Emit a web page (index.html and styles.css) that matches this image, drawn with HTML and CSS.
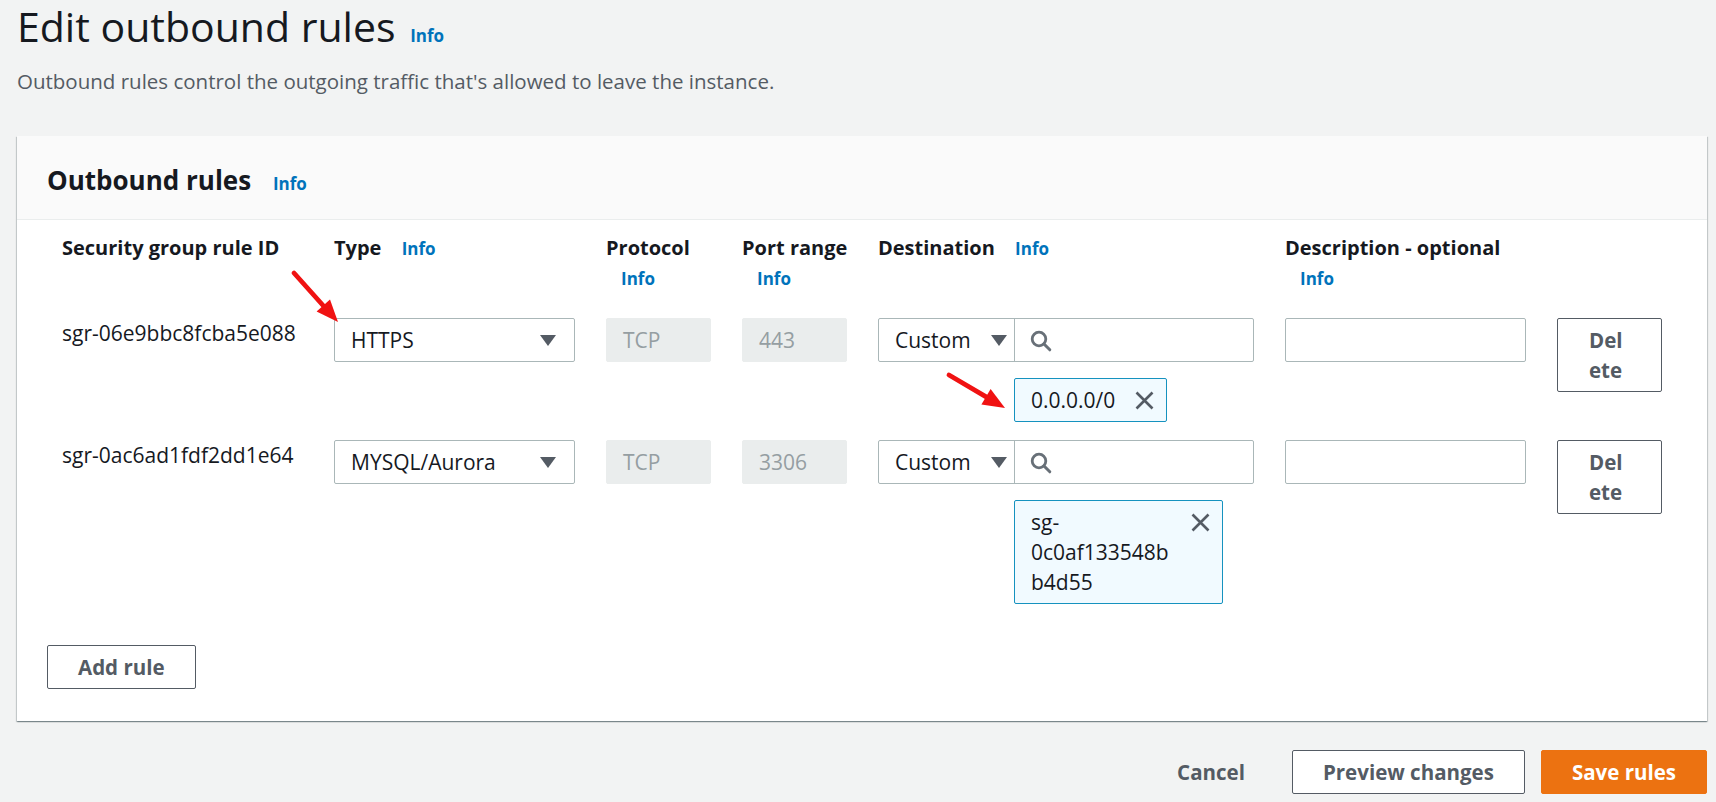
FILE: index.html
```html
<!DOCTYPE html>
<html lang="en">
<head>
<meta charset="utf-8">
<title>Edit outbound rules</title>
<link rel="stylesheet" href="styles.css">
</head>
<body>
<div class="page">
  <header class="page-header">
    <h1 class="title">Edit outbound rules <a class="info" href="#">Info</a></h1>
    <p class="subtitle">Outbound rules control the outgoing traffic that's allowed to leave the instance.</p>
  </header>

  <section class="card">
    <div class="card-header">
      <h2 class="card-title">Outbound rules <a class="info" href="#">Info</a></h2>
    </div>
    <div class="card-body">
      <div class="rules">
        <div class="rule-grid rule-head">
          <div class="label"><span class="nowrap">Security group rule ID</span></div>
          <div class="label"><span class="nowrap">Type</span> <a class="info" href="#">Info</a></div>
          <div class="label"><span class="nowrap">Protocol</span> <a class="info" href="#">Info</a></div>
          <div class="label"><span class="nowrap">Port range</span> <a class="info" href="#">Info</a></div>
          <div class="label"><span class="nowrap">Destination</span> <a class="info" href="#">Info</a></div>
          <div class="label"><span class="nowrap">Description - optional</span> <a class="info" href="#">Info</a></div>
          <div></div>
        </div>

        <div class="rule-grid rule-row">
          <div class="rule-id">sgr-06e9bbc8fcba5e088</div>
          <div class="select"><span>HTTPS</span><span class="caret"></span></div>
          <div class="field disabled">TCP</div>
          <div class="field disabled">443</div>
          <div class="dest">
            <div class="dest-group">
              <div class="dest-select"><span>Custom</span><span class="caret"></span></div>
              <div class="dest-search">
                <svg width="22" height="22" viewBox="0 0 22 22"><circle cx="9" cy="9" r="6.8" fill="none" stroke="#687078" stroke-width="2.8"/><path d="M14 14 L19.8 19.8" stroke="#687078" stroke-width="3" stroke-linecap="round"/></svg>
              </div>
            </div>
            <div class="token">
              <span class="token-text">0.0.0.0/0</span>
              <span class="token-x"><svg width="19" height="19" viewBox="0 0 19 19"><path d="M1.5 1.5 L17.5 17.5 M17.5 1.5 L1.5 17.5" stroke="#545b64" stroke-width="2.6"/></svg></span>
            </div>
          </div>
          <div class="field"></div>
          <div><button class="btn btn-delete">Delete</button></div>
        </div>

        <div class="rule-grid rule-row">
          <div class="rule-id">sgr-0ac6ad1fdf2dd1e64</div>
          <div class="select"><span>MYSQL/Aurora</span><span class="caret"></span></div>
          <div class="field disabled">TCP</div>
          <div class="field disabled">3306</div>
          <div class="dest">
            <div class="dest-group">
              <div class="dest-select"><span>Custom</span><span class="caret"></span></div>
              <div class="dest-search">
                <svg width="22" height="22" viewBox="0 0 22 22"><circle cx="9" cy="9" r="6.8" fill="none" stroke="#687078" stroke-width="2.8"/><path d="M14 14 L19.8 19.8" stroke="#687078" stroke-width="3" stroke-linecap="round"/></svg>
              </div>
            </div>
            <div class="token token-long">
              <span class="token-text">sg-<wbr>0c0af133548bb4d55</span>
              <span class="token-x"><svg width="19" height="19" viewBox="0 0 19 19"><path d="M1.5 1.5 L17.5 17.5 M17.5 1.5 L1.5 17.5" stroke="#545b64" stroke-width="2.6"/></svg></span>
            </div>
          </div>
          <div class="field"></div>
          <div><button class="btn btn-delete">Delete</button></div>
        </div>
      </div>
      <button class="btn add-rule">Add rule</button>
    </div>
  </section>

  <footer class="actions">
    <button class="btn btn-link">Cancel</button>
    <button class="btn">Preview changes</button>
    <button class="btn btn-primary">Save rules</button>
  </footer>

  <svg class="annotations" width="1716" height="802" viewBox="0 0 1716 802">
    <line x1="294" y1="273" x2="324" y2="306.5" stroke="#f01212" stroke-width="4.8" stroke-linecap="round"/>
    <polygon points="338,322 316.6,311.6 330,299.6" fill="#f01212"/>
    <line x1="949" y1="375" x2="987" y2="397.4" stroke="#f01212" stroke-width="4.8" stroke-linecap="round"/>
    <polygon points="1005,408 981.4,404.6 990.6,389" fill="#f01212"/>
  </svg>
</div>
</body>
</html>
```

FILE: styles.css
```css
* {
  box-sizing: border-box;
}

html, body {
  margin: 0;
}

body {
  background: #f2f3f3;
  font-family: "Open Sans", "Noto Sans", sans-serif;
  color: #16191f;
  font-size: 21px;
}

.page {
  position: relative;
  padding: 0 9px 0 17px;
}

.title {
  margin: 0;
  font-size: 41px;
  font-weight: 400;
  line-height: 52px;
}

.info {
  display: inline-block;
  margin-left: 15px;
  font-size: 17px;
  font-weight: 700;
  line-height: 20px;
  color: #0073bb;
  text-decoration: none;
}

.title .info {
  margin-left: 4px;
}

.subtitle {
  margin: 14px 0 0;
  font-size: 20.5px;
  line-height: 30px;
  color: #545b64;
}

.card {
  margin-top: 40px;
  background: #fff;
  box-shadow: 0 1px 1px 0 rgba(0, 28, 36, 0.3), 1px 1px 1px 0 rgba(0, 28, 36, 0.15), -1px 1px 1px 0 rgba(0, 28, 36, 0.15);
}

.card-header {
  background: #fafafa;
  border-bottom: 1px solid #eaeded;
  padding: 26px 30px 21px;
}

.card-title {
  margin: 0;
  font-size: 26px;
  font-weight: 700;
  line-height: 36px;
}

.card-body {
  padding: 13px 30px 32px;
}

.rules {
  padding: 0 15px;
}

.rule-grid {
  display: grid;
  grid-template-columns: 1fr 241px 105px 105px 376px 241px 105px;
  column-gap: 31px;
  align-items: start;
}

.label {
  font-size: 20px;
  font-weight: 700;
  line-height: 30px;
}

.nowrap {
  white-space: nowrap;
}

.rule-head + .rule-row {
  margin-top: 25px;
}

.rule-row + .rule-row {
  margin-top: 18px;
}

.rule-id {
  line-height: 30px;
  white-space: nowrap;
}

.select,
.field {
  height: 44px;
  border: 1px solid #aab7b8;
  border-radius: 2px;
  background: #fff;
  display: flex;
  align-items: center;
  line-height: 30px;
}

.select {
  justify-content: space-between;
  padding: 0 18px 0 16px;
}

.field {
  padding: 0 16px;
}

.field.disabled {
  background: #eaeded;
  border-color: #eaeded;
  color: #959ea2;
}

.caret {
  width: 0;
  height: 0;
  border-left: 8px solid transparent;
  border-right: 8px solid transparent;
  border-top: 11px solid #545b64;
}

.dest {
  display: flex;
  flex-direction: column;
  align-items: flex-start;
}

.dest-group {
  width: 100%;
  height: 44px;
  display: flex;
  border: 1px solid #aab7b8;
  border-radius: 2px;
  background: #fff;
}

.dest-select {
  width: 136px;
  flex: none;
  display: flex;
  align-items: center;
  justify-content: space-between;
  padding: 0 7px 0 16px;
  border-right: 1px solid #aab7b8;
}

.dest-search {
  flex: 1;
  display: flex;
  align-items: center;
  padding-left: 15px;
}

.dest-search svg {
  display: block;
  margin-top: 2px;
}

.token {
  display: flex;
  align-items: flex-start;
  gap: 20px;
  margin-top: 16px;
  margin-left: 136px;
  padding: 6px 12px 6px 16px;
  border: 1px solid #1592bf;
  border-radius: 2px;
  background: #f1faff;
  line-height: 30px;
}

.token-long {
  width: 209px;
}

.token-text {
  overflow-wrap: anywhere;
  min-width: 0;
}

.token-long .token-text {
  max-width: 144px;
}

.token-x {
  flex: none;
  margin-left: auto;
  height: 30px;
  display: flex;
  align-items: center;
}

.token-x svg {
  display: block;
}

.btn {
  font-family: inherit;
  font-size: 20.5px;
  font-weight: 700;
  line-height: 30px;
  padding: 6px 30px;
  border: 1px solid #545b64;
  border-radius: 2px;
  background: #fff;
  color: #545b64;
  cursor: pointer;
}

.btn-delete {
  width: 105px;
  padding: 6px 31px;
  text-align: left;
  word-break: break-all;
}

.add-rule {
  margin-top: 41px;
}

.actions {
  display: flex;
  justify-content: flex-end;
  gap: 16px;
  margin-top: 29px;
}

.btn-link {
  border-color: transparent;
  background: transparent;
}

.btn-primary {
  background: #ec7211;
  border-color: #ec7211;
  color: #fff;
}

.annotations {
  position: absolute;
  left: 0;
  top: 0;
  pointer-events: none;
}
```
